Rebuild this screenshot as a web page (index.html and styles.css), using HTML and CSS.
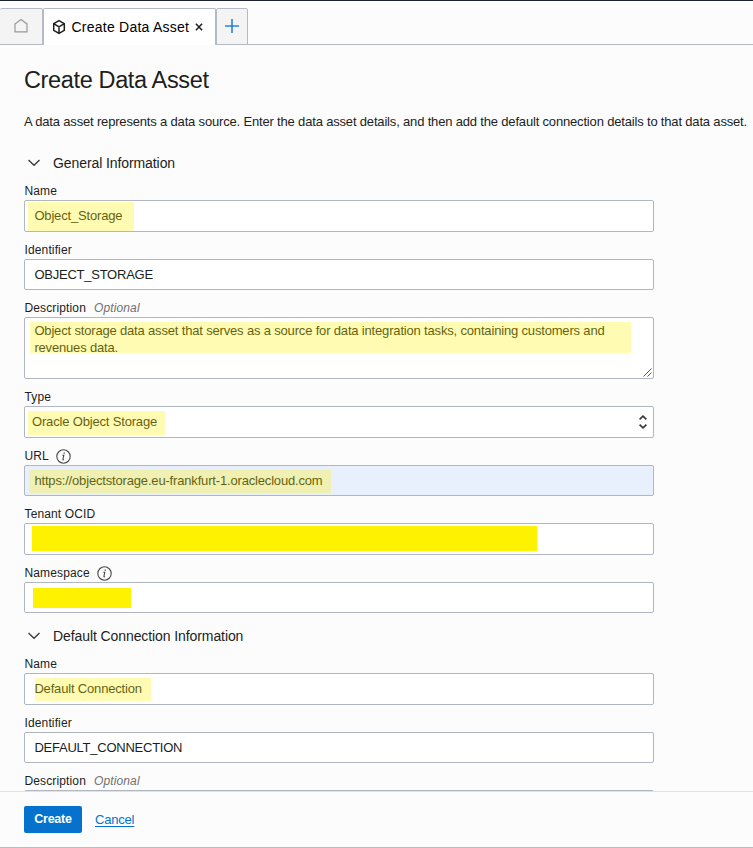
FILE: index.html
```html
<!DOCTYPE html>
<html lang="en">
<head>
<meta charset="utf-8">
<title>Create Data Asset</title>
<link rel="stylesheet" href="styles.css">
</head>
<body>
<nav class="tabs">
  <div class="tab home"><svg width="16" height="16" viewBox="0 0 16 16"><path d="M2 5.9 8 1.6l6 4.3v8H2z"/></svg></div>
  <div class="tab active">
    <svg class="cube" width="14" height="16" viewBox="0 0 14 16"><path d="M7 1.6 12.3 4.7v6.6L7 14.4l-5.3-3.1V4.7zM1.7 4.7 7 7.8l5.3-3.1M7 7.8v6.6"/></svg>
    <span class="tab-title">Create Data Asset</span>
    <svg class="close" width="8" height="8" viewBox="0 0 8 8"><path d="m.9.7 6.2 6.6M7.1.7.9 7.3"/></svg>
  </div>
  <div class="tab add"><svg width="14" height="14" viewBox="0 0 14 14"><path d="M7 0v14M0 7h14"/></svg></div>
</nav>
<main class="form">
  <h1>Create Data Asset</h1>
  <p class="intro">A data asset represents a data source. Enter the data asset details, and then add the default connection details to that data asset.</p>

  <h2 class="section"><svg width="12" height="8" viewBox="0 0 12 8"><path d="m.5 1 5.5 5.3L11.5 1"/></svg><span>General Information</span></h2>
  <label class="label">Name</label>
  <div class="box tall"><span>Object_Storage</span><i class="mark m-name"></i></div>
  <label class="label">Identifier</label>
  <div class="box"><span class="caps">OBJECT_STORAGE</span></div>
  <label class="label">Description <em>Optional</em></label>
  <div class="box area"><span>Object storage data asset that serves as a source for data integration tasks, containing customers and<br>revenues data.</span><i class="mark m-desc"></i>
    <svg class="grip" width="9" height="9" viewBox="0 0 9 9"><path d="M.5 8.5l8-8M4.5 8.5l4-4"/></svg></div>
  <label class="label">Type</label>
  <div class="box tall select"><span>Oracle Object Storage</span><i class="mark m-type"></i>
    <svg class="updown" width="8" height="14" viewBox="0 0 8 14"><path d="M.6 4.4 4 1.2l3.4 3.2M.6 9.6 4 12.8l3.4-3.2"/></svg></div>
  <label class="label">URL <svg class="info" width="15" height="15" viewBox="0 0 15 15"><circle cx="7.5" cy="7.5" r="6.7"/><path d="M6.3 6.2h1.5l-.9 4.3q0 .8 1.1.1"/><path class="dot" d="M7.6 3.5h1.3v1.3H7.6z"/></svg></label>
  <div class="box filled"><span>https://objectstorage.eu-frankfurt-1.oraclecloud.com</span><i class="mark m-url"></i></div>
  <label class="label">Tenant OCID</label>
  <div class="box tall"><i class="mark solid m-tenant"></i></div>
  <label class="label">Namespace <svg class="info" width="15" height="15" viewBox="0 0 15 15"><circle cx="7.5" cy="7.5" r="6.7"/><path d="M6.3 6.2h1.5l-.9 4.3q0 .8 1.1.1"/><path class="dot" d="M7.6 3.5h1.3v1.3H7.6z"/></svg></label>
  <div class="box"><i class="mark solid m-space"></i></div>

  <h2 class="section second"><svg width="12" height="8" viewBox="0 0 12 8"><path d="m.5 1 5.5 5.3L11.5 1"/></svg><span>Default Connection Information</span></h2>
  <label class="label">Name</label>
  <div class="box tall"><span>Default Connection</span><i class="mark m-conn"></i></div>
  <label class="label">Identifier</label>
  <div class="box"><span class="caps">DEFAULT_CONNECTION</span></div>
  <label class="label">Description <em>Optional</em></label>
  <div class="box area"></div>
</main>
<footer class="actions">
  <button class="create" type="button">Create</button>
  <a class="cancel" href="#">Cancel</a>
</footer>
</body>
</html>
```
FILE: styles.css
```css
* { box-sizing: border-box; }
body {
  margin: 0;
  height: 848px;
  overflow: hidden;
  display: flex;
  flex-direction: column;
  background: #fcfcfc;
  border-top: 1px solid #1c2230;
  border-bottom: 1px solid #b9bcc0;
  color: #201e1c;
  font-family: "Liberation Sans", Arial, sans-serif;
  font-size: 13px;
  letter-spacing: -.17px;
}
svg { fill: none; stroke: #3a3836; flex: none; }

.tabs {
  flex: none;
  height: 44px;
  padding-top: 7px;
  display: flex;
  box-shadow: inset 0 -1px #b3bac4;
}
.tab {
  display: flex;
  align-items: center;
  border: 1px solid #b3bac4;
  border-radius: 2px 2px 0 0;
  background: #f4f4f4;
}
.home { width: 43px; border-left: 0; padding: 0 0 1px 13px; }
.home svg { stroke: #999; stroke-width: 1.2; }
.active {
  width: 173px;
  padding-left: 7.5px;
  background: #fff;
  border-bottom: 0;
  color: #000;
}
.cube { stroke: #201e1c; stroke-width: 1.5; }
.tab-title { width: 123px; margin-left: 6px; font-size: 14px; white-space: nowrap; letter-spacing: .24px; }
.close { stroke: #201e1c; stroke-width: 1.5; }
.add { width: 32px; justify-content: center; padding-bottom: 1px; }
.add svg { stroke: #2484dc; stroke-width: 1.6; }

.form { flex: none; height: 746px; padding: 0 0 0 24px; overflow: hidden; }
h1 { margin: 0; padding-top: 20px; height: 67px; font-size: 23.5px; line-height: 30px; font-weight: 400; letter-spacing: -.36px; }
.intro { margin: 0; height: 38px; line-height: 20px; white-space: nowrap; letter-spacing: -.173px; }
.section {
  display: flex;
  align-items: center;
  gap: 13px;
  margin: 0 0 -3px;
  padding-left: 4px;
  height: 26px;
  font-size: 14px;
  font-weight: 400;
  letter-spacing: -.09px;
}
.section svg { stroke-width: 1.3; }
.second { margin-top: 10px; }
.label {
  display: flex;
  align-items: center;
  height: 27px;
  padding: 9px 0 0 .5px;
  font-size: 12px;
  letter-spacing: .13px;
}
.label em { margin-left: 8px; color: #707070; }
.info { margin-left: 7.5px; stroke: #4a4846; stroke-width: 1.1; }
.dot { fill: #4a4846; stroke: none; }

.box {
  position: relative;
  display: flex;
  align-items: center;
  width: 630px;
  height: 31px;
  padding: 0 9.4px 1px;
  background: #fff;
  border: 1px solid #b0b7c1;
  border-radius: 2px;
  white-space: nowrap;
}
.caps { letter-spacing: -.24px; }
.tall { height: 32px; }
.filled { background: #e8f0fe; }
.area { height: 62px; align-items: flex-start; padding-top: 4px; line-height: 17px; }
.select { justify-content: space-between; padding: 0 6px 1px 7px; }
.updown { stroke-width: 1.7; }
.grip { position: absolute; right: 1px; bottom: 1px; stroke: #555; }

/* Highlighter strokes laid over the field values */
.mark { position: absolute; background: rgba(255, 242, 0, .3); }
.solid { background: #fff200; }
.m-name { left: 3px; top: 1px; width: 106px; height: 29px; }
.m-desc { left: 5px; top: 4px; width: 601px; height: 31px; }
.m-type { left: 3px; top: 4px; width: 137px; height: 24px; }
.m-url { left: 4px; top: 4px; width: 302px; height: 23px; }
.m-tenant { left: 7px; top: 2px; width: 505px; height: 25px; }
.m-space { left: 8px; top: 5px; width: 98px; height: 20px; }
.m-conn { left: 10px; top: 4px; width: 116px; height: 23px; }

.actions {
  flex: 1;
  display: flex;
  align-items: flex-start;
  padding: 14px 24px;
  border-top: 1px solid #e0e1e3;
}
.create {
  width: 58px;
  height: 27px;
  padding: 0 0 2px;
  border: 0;
  border-radius: 2px;
  background: #0572ce;
  color: #fff;
  font: bold 12.5px "Liberation Sans", Arial, sans-serif;
  letter-spacing: -.25px;
}
.cancel { margin: 6px 0 0 13px; line-height: 16px; color: #0572ce; text-underline-offset: 2px; letter-spacing: -.2px; }
```
